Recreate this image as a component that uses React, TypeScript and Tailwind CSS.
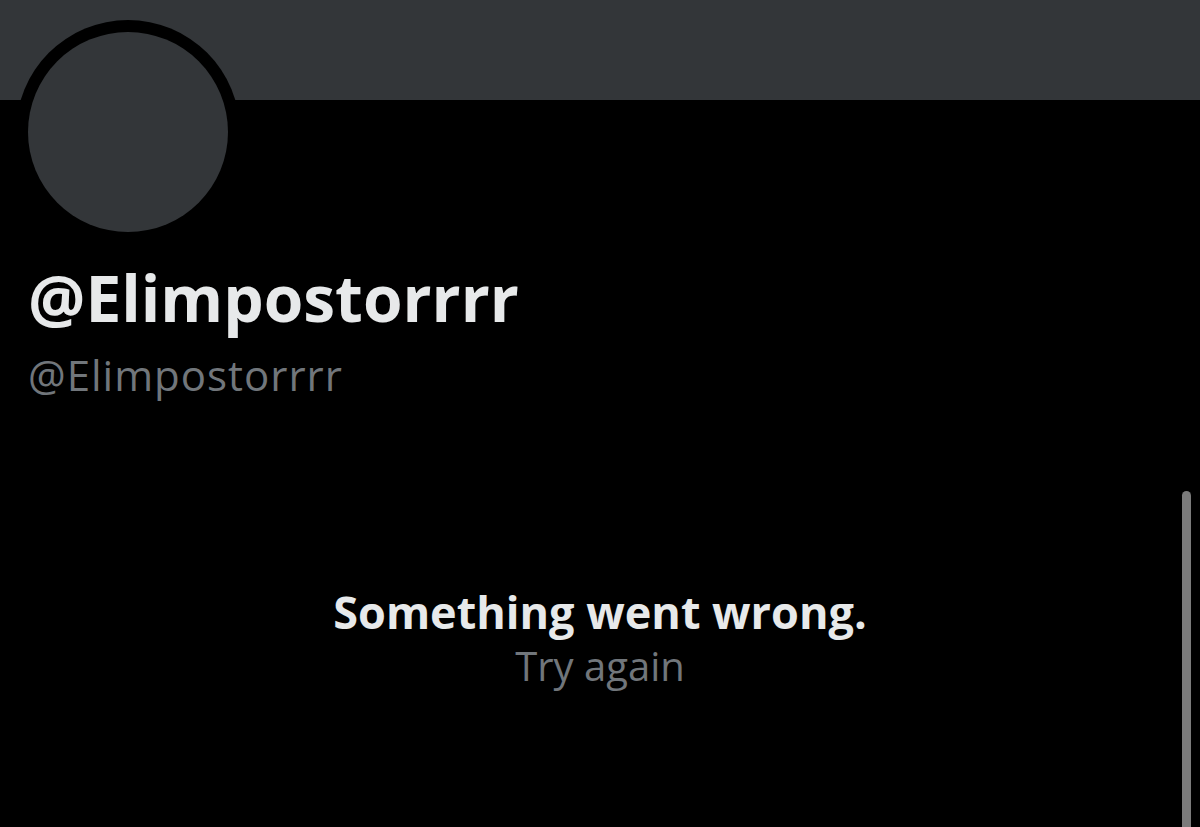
import React from "react";

export default function App() {
  return (
    <div className="relative w-[1200px] h-[827px] bg-black overflow-hidden" style={{ fontFamily: "'Open Sans', 'Noto Sans', sans-serif" }}>
      <div className="h-[100px] bg-[#333639]" />
      <div className="absolute left-[16px] top-[20px] w-[224px] h-[224px] rounded-full bg-black p-[12px]">
        <div className="w-full h-full rounded-full bg-[#333639]" />
      </div>
      <div className="pl-[28px] pt-[166px]">
        <div className="text-[#e7e9ea] font-bold text-[64px] leading-[64px]">@Elimpostorrrr</div>
        <div className="text-[#71767b] text-[42px] leading-[48px] mt-[21px] tracking-[1px]">@Elimpostorrrr</div>
      </div>
      <div className="flex flex-col items-center mt-[193px]">
        <div className="text-[#e7e9ea] font-bold text-[45px] leading-[40px]">Something went wrong.</div>
        <div className="text-[#71767b] text-[40px] leading-[40px] mt-[14px]">Try again</div>
      </div>
      <div className="absolute left-[1182px] top-[491px] w-[9px] h-[340px] rounded-t-full bg-[#7b7b7b]" />
    </div>
  );
}
